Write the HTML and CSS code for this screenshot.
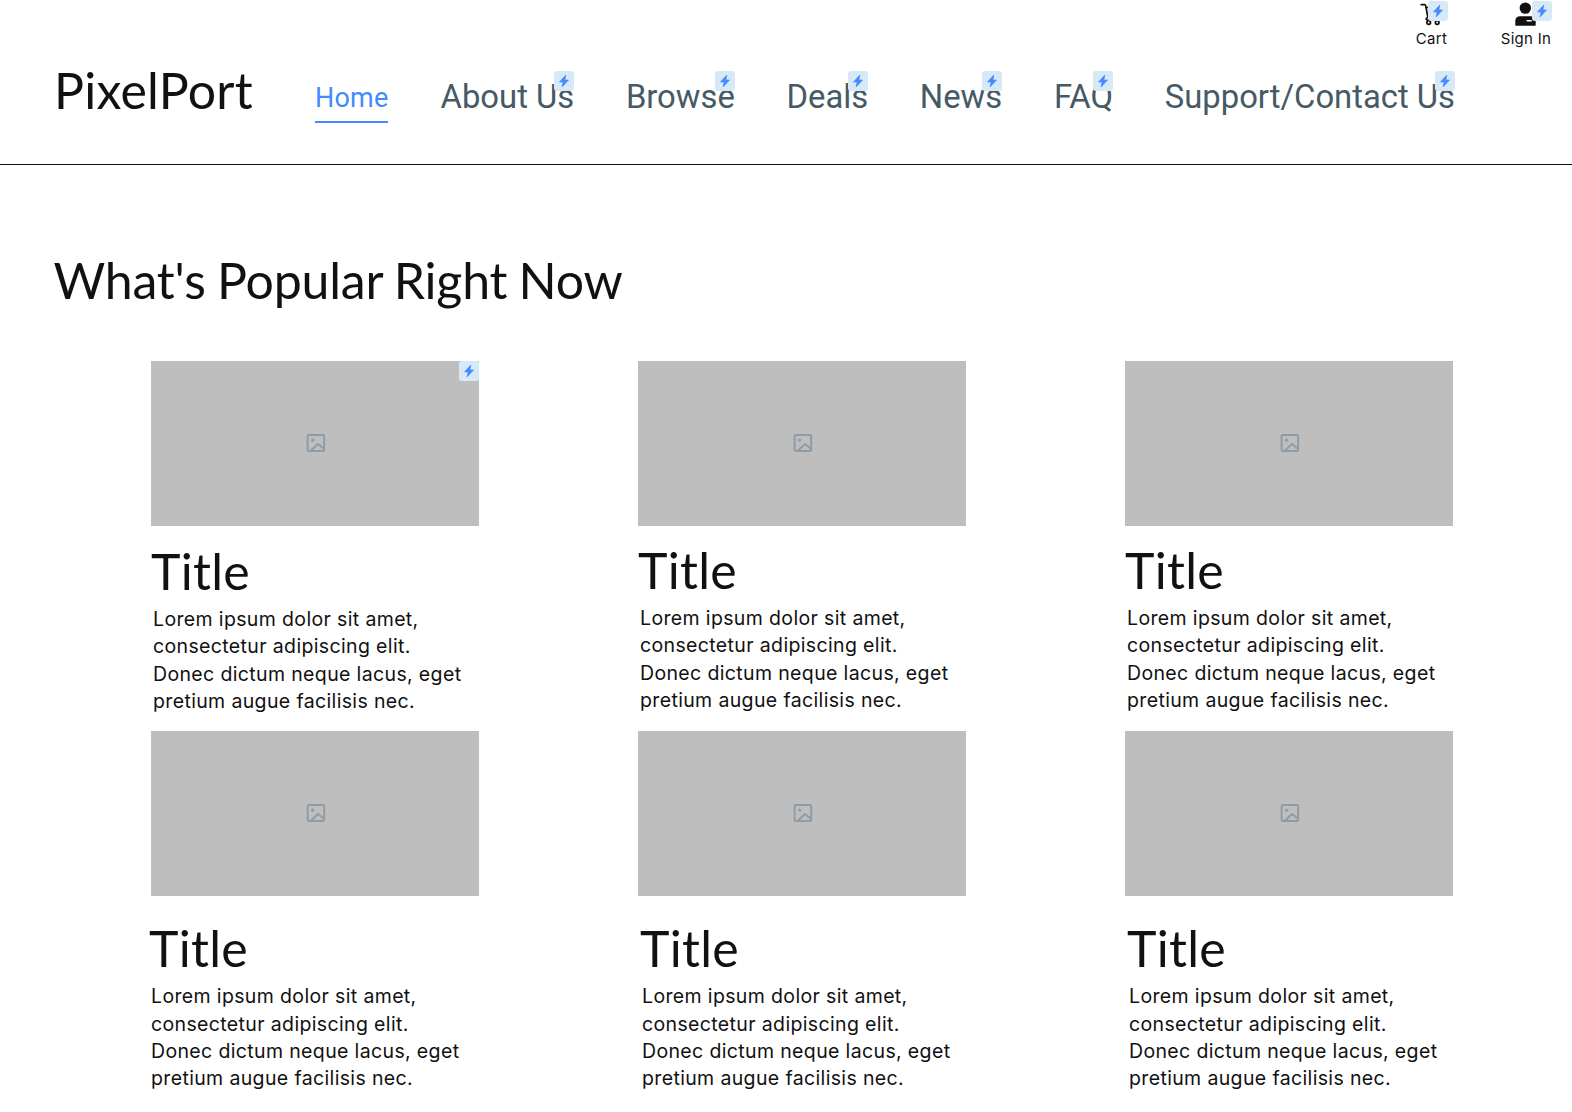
FILE: index.html
```html
<!DOCTYPE html>
<html lang="en">
<head>
<meta charset="utf-8">
<title>PixelPort</title>
<link rel="stylesheet" href="styles.css">
</head>
<body>
<svg width="0" height="0" class="defs" aria-hidden="true">
  <symbol id="bolt" viewBox="0 0 20 20"><path d="M11.7 4.2 5.6 10.9H9.2L8.2 15.8 14.4 9.1H10.8Z" fill="#448aff" stroke="#448aff" stroke-width=".8" stroke-linejoin="round"/></symbol>
  <symbol id="image" viewBox="0 0 20 20"><g fill="none" stroke="#8f9ca6" stroke-width="2" stroke-linejoin="round"><rect x="1.6" y="2" width="16.600" height="16" rx="1.2"/><path d="M4.800 17.800 12 11l6 4.800"/></g><circle cx="6.700" cy="7.200" r="1.600" fill="#8f9ca6"/></symbol>
</svg>
<header class="header">
  <div class="account">
    <a class="action cart">
      <svg class="action-icon" viewBox="0 0 24 26"><g fill="none" stroke="#111" stroke-width="1.7" stroke-linecap="round" stroke-linejoin="round"><path d="M1.200 3.700H4.500q1 0 1.200 1l2.100 11.300-1.300 1.300q-1 1.500.8 1.500H18.500"/><path d="M6.500 6.500H21l-1.800 8.500H8.300"/><circle cx="8.700" cy="21.500" r="1.800" fill="#fff"/><circle cx="17.200" cy="21.500" r="1.800" fill="#fff"/></g></svg>
      <span>Cart</span><svg class="badge"><use href="#bolt"/></svg>
    </a>
    <a class="action sign">
      <svg class="action-icon" viewBox="0 0 24 26"><circle cx="11.300" cy="7.100" r="5.700" fill="#111"/><path d="M1.300 24v-4q0-4.800 5-4.800h10.400q5 0 5 4.800v4q0 .8-.8.8H2.100q-.8 0-.8-.8z" fill="#111"/><path d="M13.200 19.700h4" stroke="#fff" stroke-width="1.500" stroke-linecap="round"/></svg>
      <span>Sign In</span><svg class="badge"><use href="#bolt"/></svg>
    </a>
  </div>
  <div class="bar">
    <div class="logo">PixelPort</div>
    <nav class="nav">
      <a class="link active">Home</a>
      <a class="link">About Us<svg class="badge"><use href="#bolt"/></svg></a>
      <a class="link">Browse<svg class="badge"><use href="#bolt"/></svg></a>
      <a class="link">Deals<svg class="badge"><use href="#bolt"/></svg></a>
      <a class="link">News<svg class="badge"><use href="#bolt"/></svg></a>
      <a class="link">FAQ<svg class="badge"><use href="#bolt"/></svg></a>
      <a class="link">Support/Contact Us<svg class="badge"><use href="#bolt"/></svg></a>
    </nav>
  </div>
</header>
<main class="main">
  <h1 class="heading">What's Popular Right Now</h1>
  <div class="grid">
    <article class="card first"><div class="thumb"><svg><use href="#image"/></svg><svg class="badge"><use href="#bolt"/></svg></div><h2>Title</h2><p>Lorem ipsum dolor sit amet,<br>consectetur adipiscing elit.<br>Donec dictum neque lacus, eget<br>pretium augue facilisis nec.</p></article>
    <article class="card"><div class="thumb"><svg><use href="#image"/></svg></div><h2>Title</h2><p>Lorem ipsum dolor sit amet,<br>consectetur adipiscing elit.<br>Donec dictum neque lacus, eget<br>pretium augue facilisis nec.</p></article>
    <article class="card"><div class="thumb"><svg><use href="#image"/></svg></div><h2>Title</h2><p>Lorem ipsum dolor sit amet,<br>consectetur adipiscing elit.<br>Donec dictum neque lacus, eget<br>pretium augue facilisis nec.</p></article>
    <article class="card lower left"><div class="thumb"><svg><use href="#image"/></svg></div><h2>Title</h2><p>Lorem ipsum dolor sit amet,<br>consectetur adipiscing elit.<br>Donec dictum neque lacus, eget<br>pretium augue facilisis nec.</p></article>
    <article class="card lower right"><div class="thumb"><svg><use href="#image"/></svg></div><h2>Title</h2><p>Lorem ipsum dolor sit amet,<br>consectetur adipiscing elit.<br>Donec dictum neque lacus, eget<br>pretium augue facilisis nec.</p></article>
    <article class="card lower right"><div class="thumb"><svg><use href="#image"/></svg></div><h2>Title</h2><p>Lorem ipsum dolor sit amet,<br>consectetur adipiscing elit.<br>Donec dictum neque lacus, eget<br>pretium augue facilisis nec.</p></article>
  </div>
</main>
</body>
</html>
```
FILE: styles.css
```css
* { box-sizing: border-box; }
body { margin: 0; width: 1572px; height: 1112px; overflow: hidden; background: #fff; color: #111; font-family: Inter, "Liberation Sans", sans-serif; }
svg { display: block; }
.defs { position: absolute; }
.badge { position: absolute; top: 0; right: 0; width: 20px; height: 20px; border-radius: 3px; background: #d7e8f7; }
.header { height: 165px; border-bottom: 1px solid #111; }
.account { display: flex; justify-content: flex-end; gap: 52px; height: 60px; padding: 1px 20px 0 0; }
.action { position: relative; display: flex; flex-direction: column; align-items: center; font-size: 15px; letter-spacing: .3px; line-height: 20px; white-space: nowrap; }
.cart { width: 33px; }
.sign { width: 52px; }
.action-icon { width: 24px; height: 26px; margin-bottom: 2px; }
.bar { display: flex; height: 80px; padding-left: 54px; }
.logo { width: 261px; font: 50px/60px Lato, sans-serif; letter-spacing: .25px; }
.nav { display: flex; align-items: flex-start; gap: 51.7px; padding-top: 11px; }
.link { position: relative; font: 32.8px/52px Roboto, sans-serif; color: #455a64; white-space: nowrap; }
.active { height: 52px; margin-right: .4px; font-size: 27px; line-height: 54px; letter-spacing: .2px; color: #448aff; border-bottom: 2px solid #448aff; }
.main { padding-top: 85px; }
.heading { margin: 0 0 0 53.5px; height: 111px; font: 50px/60px Lato, sans-serif; letter-spacing: -.2px; word-spacing: -1.2px; }
.grid { display: grid; grid-template-columns: repeat(3, 328px); grid-auto-rows: 370px; column-gap: 159px; padding-left: 151px; }
.thumb { position: relative; display: flex; align-items: center; justify-content: center; height: 165px; padding: 0 0 1px 1px; background: #bebebe; }
.thumb svg { width: 20px; height: 20px; }
.card h2 { margin: 14px 0 0; font: 50px/60px Lato, sans-serif; letter-spacing: .3px; }
.card p { margin: 5px 0 0 2px; font-size: 19.5px; letter-spacing: .36px; line-height: 27.3px; white-space: nowrap; }
.first h2 { margin-top: 15px; }
.lower h2 { margin-top: 22px; }
.lower p { margin-top: 5.4px; }
.left h2, .left p { transform: translateX(-2px); }
.right h2, .right p { transform: translateX(2px); }
```
